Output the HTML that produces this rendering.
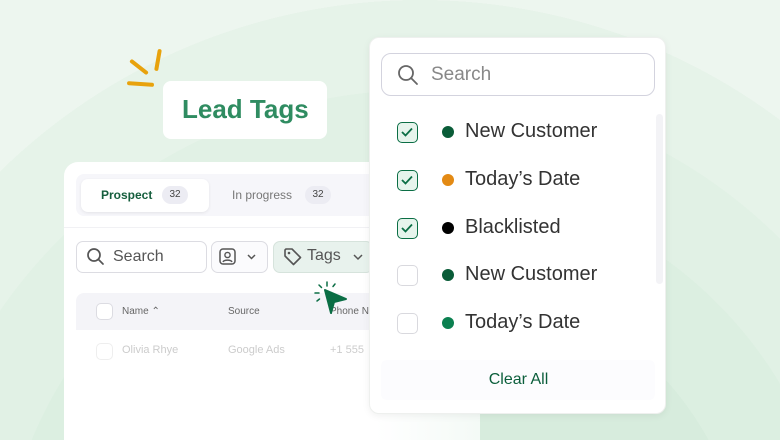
<!DOCTYPE html>
<html><head><meta charset="utf-8"><style>
*{box-sizing:border-box;margin:0;padding:0}
body{width:780px;height:440px;overflow:hidden;font-family:"Liberation Sans",sans-serif;position:relative;
background:radial-gradient(circle at 420px 600px,#d7ecdd 0 330px,#dcefe1 330px 420px,#e1f1e5 420px 510px,#e6f3e9 510px 600px,#edf6ef 600px);}
.abs{position:absolute}
.card{background:#fff;border-radius:14px}
.sp{position:absolute;background:#e8a20c;border-radius:3px}
.cb{position:absolute;left:27px;width:21px;height:21px;border:1.5px solid #d9d9de;border-radius:5px;background:#fff}
.cb.on{border-color:#0b6e45;background:#e6f4ec}
.row{position:absolute;left:0;width:280px;height:30px}
.dot{position:absolute;left:72px;top:9px;width:12px;height:12px;border-radius:50%}
.lbl{position:absolute;left:95px;top:3px;font-size:20px;color:#333}
</style></head><body>
<div class="sp" style="left:156px;top:49px;width:4px;height:22px;transform:rotate(10deg)"></div>
<div class="sp" style="left:137px;top:56px;width:4px;height:22px;transform:rotate(-52deg)"></div>
<div class="sp" style="left:127px;top:82px;width:27px;height:4px;transform:rotate(4deg)"></div>
<div class="card abs" style="left:163px;top:81px;width:164px;height:58px;border-radius:8px;"></div>
<div class="abs" style="left:182px;top:94px;font-size:26px;font-weight:bold;color:#2f8c61">Lead Tags</div>

<div class="abs" style="left:64px;top:162px;width:416px;height:278px;background:linear-gradient(90deg,#fff 75%,#f4faf6);border-radius:14px 14px 0 0"></div>
<div class="abs" style="left:76px;top:174px;width:300px;height:42px;background:#f6f6fa;border-radius:8px"></div>
<div class="abs" style="left:81px;top:179px;width:128px;height:33px;background:#fff;border-radius:7px;box-shadow:0 1px 3px rgba(0,0,0,.08)"></div>
<div class="abs" style="left:101px;top:188px;font-size:12px;font-weight:bold;color:#155e3d">Prospect</div>
<div class="abs" style="left:162px;top:186px;width:26px;height:18px;border-radius:9px;background:#ececf3;font-size:10px;color:#444;text-align:center;line-height:18px">32</div>
<div class="abs" style="left:232px;top:188px;font-size:12px;color:#777">In progress</div>
<div class="abs" style="left:305px;top:186px;width:26px;height:18px;border-radius:9px;background:#ececf3;font-size:10px;color:#444;text-align:center;line-height:18px">32</div>
<div class="abs" style="left:64px;top:227px;width:310px;height:1px;background:#f1f1f4"></div>

<div class="abs" style="left:76px;top:241px;width:131px;height:32px;border:1px solid #dcdce2;border-radius:7px;background:#fff"></div>
<svg class="abs" style="left:86px;top:247px" width="20" height="20" viewBox="0 0 20 20"><circle cx="8" cy="8" r="6" fill="none" stroke="#555" stroke-width="1.7"/><path d="M12.5 12.5 17 17" stroke="#555" stroke-width="1.7" stroke-linecap="round"/></svg>
<div class="abs" style="left:113px;top:248px;font-size:16px;color:#555">Search</div>
<div class="abs" style="left:211px;top:241px;width:57px;height:32px;border:1px solid #dcdce2;border-radius:7px;background:#fbfbfd"></div>
<svg class="abs" style="left:218px;top:248px" width="44" height="18" viewBox="0 0 44 18"><rect x="2" y="1" width="15" height="15" rx="3" fill="none" stroke="#555" stroke-width="1.5"/><circle cx="9.5" cy="7" r="2.6" fill="none" stroke="#555" stroke-width="1.4"/><path d="M5 14c1-2.5 8-2.5 9 0" fill="none" stroke="#555" stroke-width="1.4"/><path d="M30 7l3.5 3.5L37 7" fill="none" stroke="#555" stroke-width="1.5"/></svg>
<div class="abs" style="left:273px;top:241px;width:100px;height:32px;border:1px solid #d6e3dc;border-radius:7px;background:#e8f2ed"></div>
<svg class="abs" style="left:283px;top:247px" width="20" height="20" viewBox="0 0 20 20"><path d="M2 3v6l8.5 8.5 7-7L9 2H3z" fill="none" stroke="#555" stroke-width="1.6" stroke-linejoin="round"/><circle cx="6" cy="6" r="1.3" fill="#555"/></svg>
<div class="abs" style="left:307px;top:247px;font-size:16px;color:#555">Tags</div>
<svg class="abs" style="left:352px;top:252px" width="12" height="10"><path d="M2 3l4 4 4-4" fill="none" stroke="#555" stroke-width="1.5"/></svg>

<div class="abs" style="left:76px;top:293px;width:300px;height:37px;background:#f4f4f8;border-radius:8px 8px 0 0"></div>
<div class="abs" style="left:96px;top:303px;width:17px;height:17px;border:1px solid #dcdce2;border-radius:5px;background:#fff"></div>
<div class="abs" style="left:122px;top:306px;font-size:10px;color:#666">Name ⌃</div>
<div class="abs" style="left:228px;top:306px;font-size:10px;color:#666">Source</div>
<div class="abs" style="left:330px;top:306px;font-size:10px;color:#666">Phone N</div>
<div class="abs" style="left:96px;top:343px;width:17px;height:17px;border:1px solid #eee;border-radius:5px"></div>
<div class="abs" style="left:122px;top:344px;font-size:11px;color:#ccc">Olivia Rhye</div>
<div class="abs" style="left:228px;top:344px;font-size:11px;color:#ccc">Google Ads</div>
<div class="abs" style="left:330px;top:344px;font-size:11px;color:#ccc">+1 555</div>
<svg class="abs" style="left:312px;top:280px" width="44" height="40" viewBox="0 0 44 40"><path d="M13 10 34 19 22 22 19 33z" fill="#0b6e45" stroke="#0b6e45" stroke-width="2" stroke-linejoin="round"/><path d="M15 2v4M7 5l2.5 2.5M23 4l-2 2.5M3 13h4M5 21l2.5-2" stroke="#0b6e45" stroke-width="1.5" stroke-linecap="round"/></svg>

<div class="card abs" style="left:369px;top:37px;width:297px;height:377px;border-radius:10px;box-shadow:0 2px 8px rgba(0,0,0,.06);border:1px solid #eef0ee">
  <div class="abs" style="left:11px;top:15px;width:274px;height:43px;border:1.5px solid #d3d3de;border-radius:10px"></div>
  <svg class="abs" style="left:27px;top:26px" width="22" height="22" viewBox="0 0 22 22"><circle cx="9" cy="9" r="7" fill="none" stroke="#666" stroke-width="1.8"/><path d="M14 14 20 20" stroke="#666" stroke-width="1.8" stroke-linecap="round"/></svg>
  <div class="abs" style="left:61px;top:26px;font-size:19px;color:#888">Search</div>
  <div class="abs" style="left:286px;top:76px;width:7px;height:170px;background:#f3f3f6;border-radius:4px"></div>
  <div class="row" style="top:79px"><div class="cb on" style="top:5px"><svg width="18" height="18" viewBox="0 0 18 18"><path d="M4 9l3.5 3.5L14 5.5" fill="none" stroke="#0b6e45" stroke-width="1.8"/></svg></div><div class="dot" style="background:#0a5c38"></div><div class="lbl">New Customer</div></div>
  <div class="row" style="top:127px"><div class="cb on" style="top:5px"><svg width="18" height="18" viewBox="0 0 18 18"><path d="M4 9l3.5 3.5L14 5.5" fill="none" stroke="#0b6e45" stroke-width="1.8"/></svg></div><div class="dot" style="background:#e38a14"></div><div class="lbl">Today’s Date</div></div>
  <div class="row" style="top:175px"><div class="cb on" style="top:5px"><svg width="18" height="18" viewBox="0 0 18 18"><path d="M4 9l3.5 3.5L14 5.5" fill="none" stroke="#0b6e45" stroke-width="1.8"/></svg></div><div class="dot" style="background:#000"></div><div class="lbl">Blacklisted</div></div>
  <div class="row" style="top:222px"><div class="cb" style="top:5px"></div><div class="dot" style="background:#0a5c38"></div><div class="lbl">New Customer</div></div>
  <div class="row" style="top:270px"><div class="cb" style="top:5px"></div><div class="dot" style="background:#0b8050"></div><div class="lbl">Today’s Date</div></div>
  <div class="abs" style="left:11px;top:322px;width:274px;height:40px;background:#fcfcfe;border-radius:6px"></div>
  <div class="abs" style="left:0;width:297px;top:333px;text-align:center;font-size:16px;color:#0b5e3b">Clear All</div>
</div>
</body></html>
